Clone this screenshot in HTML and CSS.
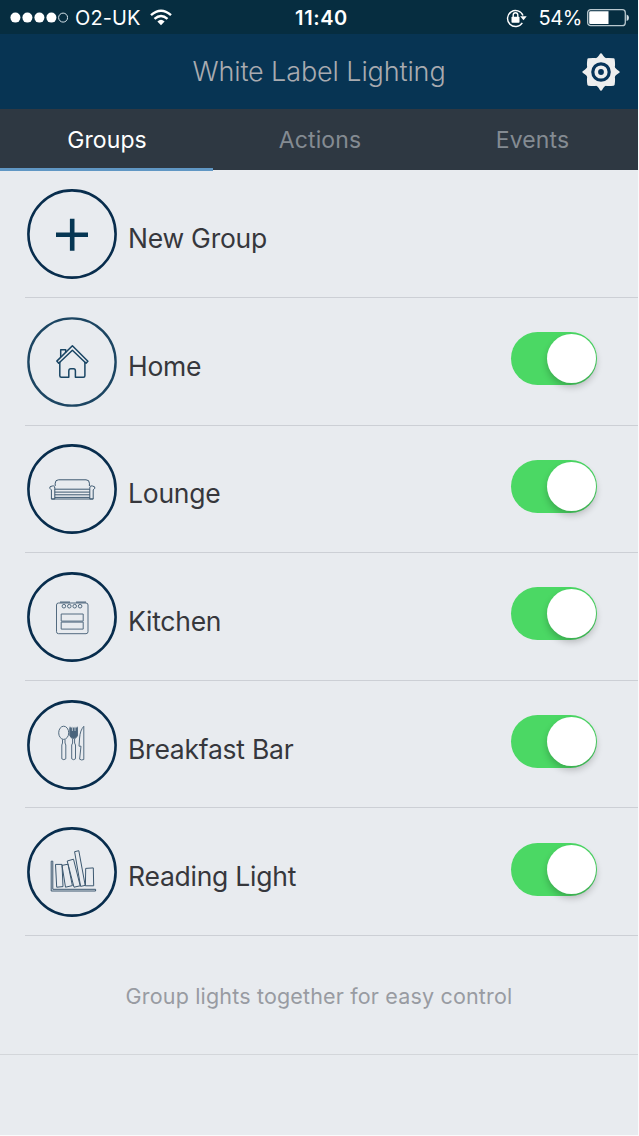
FILE: index.html
```
<!DOCTYPE html>
<html lang="en">
<head>
<meta charset="utf-8">
<title>White Label Lighting</title>
<link rel="stylesheet" href="styles.css">
</head>
<body>
<div class="app">
  <header class="status">
    <div class="status-left">
      <svg class="signal" width="58" height="12" viewBox="0 0 58 12"><g fill="#fff"><circle cx="5.4" cy="5.6" r="5"/><circle cx="17.4" cy="5.6" r="5"/><circle cx="29.4" cy="5.6" r="5"/><circle cx="41.4" cy="5.6" r="5"/></g><circle cx="53.1" cy="5.6" r="4.5" fill="none" stroke="#d5e3ea"/></svg>
      <span class="carrier">O2-UK</span>
      <svg class="wifi" width="22" height="18" viewBox="0 0 22 18"><g fill="none" stroke="#fff" stroke-width="2.4"><path d="M1 6.2Q11-2.7 21 6.2"/><path d="M4.5 9.8Q11 4 17.5 9.8"/></g><path d="M7.4 12.4Q11 9.2 14.6 12.4L11 16.2z" fill="#fff"/></svg>
    </div>
    <span class="clock">11:40</span>
    <div class="status-right">
      <svg class="lock" width="21" height="20" viewBox="0 0 21 20"><path d="M16.3 14.8A8 8 0 1 1 17 7.6" fill="none" stroke="#fff" stroke-width="1.4"/><path d="M14.2 8.2h6.5l-3.2 4z" fill="#fff"/><rect x="5.5" y="8.7" width="8" height="6" rx=".7" fill="#fff"/><path d="M7.2 9V7a2.3 2.3 0 0 1 4.6 0v2" fill="none" stroke="#fff" stroke-width="1.4"/></svg>
      <span class="percent">54%</span>
      <svg class="battery" width="43" height="18" viewBox="0 0 43 18"><rect x=".7" y=".7" width="37.6" height="16" rx="3" fill="none" stroke="#b9c8ce" stroke-width="1.3"/><path d="M3.5 2.3H21.5V15.1H3.5Q2.2 15.1 2.2 13.8V3.6Q2.2 2.3 3.5 2.3z" fill="#fff"/><path d="M39.6 5.5Q42 6.2 42 8.8T39.6 12z" fill="#d5e0e4"/></svg>
    </div>
  </header>
  <div class="nav">
    <h1 class="title">White Label Lighting</h1>
    <svg class="gear" width="38" height="38" viewBox="-19 -19 38 38"><path d="M0-17.3Q3-12.2 5.6-12.6Q8-13 12.4-12.4Q13-8 12.6-5.6Q12.2-3 17.3 0Q12.2 3 12.6 5.6Q13 8 12.4 12.4Q8 13 5.6 12.6Q3 12.2 0 17.3Q-3 12.2-5.6 12.6Q-8 13-12.4 12.4Q-13 8-12.6 5.6Q-12.2 3-17.3 0Q-12.2-3-12.6-5.6Q-13-8-12.4-12.4Q-8-13-5.6-12.6Q-3-12.2 0-17.3z" fill="#eee" stroke="#eee" stroke-width="2.6" stroke-linejoin="round"/><circle r="8.2" fill="none" stroke="#07345a" stroke-width="3.2"/><circle r="2.9" fill="#07345a"/></svg>
  </div>
  <nav class="tabs">
    <span class="tab active">Groups</span>
    <span class="tab">Actions</span>
    <span class="tab">Events</span>
  </nav>
  <main class="list">
    <div class="row">
      <svg class="icon" width="90" height="90" viewBox="-45 -45 90 90"><circle class="ring" r="43.6"/><path d="M-16 .7H16M.2-15.2V16.8" class="plus"/></svg>
      <span class="name">New Group</span>
    </div>
    <div class="row">
      <svg class="icon" width="90" height="90" viewBox="-45 -45 90 90"><circle class="ring thin" r="43.6"/><g class="line house"><path d="M-15.2-.9L.4-16.3L15.9-.8L14 1.3L.4-11.8L-13.3 1.3z"/><path d="M-12.2-.2V13.8Q-12.2 15.3-10.7 15.3H-3.2V9Q-3.2 6.8-1.2 6.8H1.6Q3.4 6.8 3.4 9V15.3H11.4Q12.9 15.3 12.9 13.8V-.2"/><path d="M-11.3-5V-12.3H-6.3V-9.5"/></g></svg>
      <span class="name">Home</span><span class="switch"><i class="knob"></i></span>
    </div>
    <div class="row">
      <svg class="icon" width="90" height="90" viewBox="-45 -45 90 90"><circle class="ring" r="43.6"/><g class="line"><path d="M-16.8-3V-5.8Q-16.8-9.2-13.4-9.2H14Q17.4-9.2 17.4-5.8V-3"/><path d="M-17.2 10H-20.6V.9Q-23.2-.9-22-2.2Q-17-4.6-17.2-.8zM17.8 10H21.2V.9Q23.8-.9 22.6-2.2Q17.6-4.6 17.8-.8z"/><path d="M-17.2.2H17.8M-17.2 3.1H17.8M-17.2 5.8H17.8M-17.2 8.4H17.8M-20.6 10H21.2"/></g></svg>
      <span class="name">Lounge</span><span class="switch"><i class="knob"></i></span>
    </div>
    <div class="row">
      <svg class="icon" width="90" height="90" viewBox="-45 -45 90 90"><circle class="ring" r="43.6"/><g class="line oven"><rect x="-15.5" y="-14" width="31.5" height="30.7" rx="2"/><path d="M-12-14.8H-2M4-14.8H14" stroke-width="1.2"/><circle cx="-8.1" cy="-10.8" r="1.8"/><circle cx="-2.7" cy="-10.8" r="1.8"/><circle cx="2.7" cy="-10.8" r="1.8"/><circle cx="8.1" cy="-10.8" r="1.8"/><path d="M-10.8-3H11.2V4.1H-10.8zM-10.8 5.1H11.2V12.1H-10.8z"/></g></svg>
      <span class="name">Kitchen</span><span class="switch"><i class="knob"></i></span>
    </div>
    <div class="row">
      <svg class="icon" width="90" height="90" viewBox="-45 -45 90 90"><circle class="ring" r="43.6"/><g class="line cutlery"><ellipse cx="-8.3" cy="-12.2" rx="5" ry="6.6"/><path d="M-9.5-5.5V-2L-10.2 0V13.8Q-8.2 15.6-6.2 13.8V0L-7-2V-5.5"/><path d="M-2-18.3V-9.5Q-1.7-7.5.6-6.3V-2L-.3 0V13.8Q1.6 15.6 3.5 13.8V0L2.6-2V-6.3Q5-7.5 5.3-9.5V-18.3"/><path class="tines" d="M-2-17H5.3V-9.5Q4.6-7.2 1.7-6.6Q-1.4-7.2-2-9.5z"/><path d="M.4-18.3V-14M3-18.3V-14" stroke="#b9c4cd"/><path d="M11.8 14.5V-18.7Q8.2-15 7.6-7L7 1.2H9L7.6 14.2Q9.5 15.6 11.8 14.5z"/></g></svg>
      <span class="name">Breakfast Bar</span><span class="switch"><i class="knob"></i></span>
    </div>
    <div class="row">
      <svg class="icon" width="90" height="90" viewBox="-45 -45 90 90"><circle class="ring" r="43.6"/><g class="line"><path d="M-20.8-10.8H-19.2V17.3H23.6V19H-20.8z"/><path d="M-16.5-7.6H-10L-9 14.6L-15.3 15.2zM-10-6.6L-4-7.8L.4 13.6L-6.5 15.2zM-4.8-11L1.5-12.8L8.2 13.8L2 15.2zM2.6-20.3L6.8-21.3L13.2 13.4L8.6 14.4zM13.7-3.6L21.3-4.1L21.7 13.8H13.4z"/></g></svg>
      <span class="name">Reading Light</span><span class="switch"><i class="knob"></i></span>
    </div>
  </main>
  <p class="hint">Group lights together for easy control</p>
</div>
</body>
</html>
```
FILE: styles.css
```
* { box-sizing: border-box; }
body { margin: 0; background: #fafbfc; font-family: Inter, "Liberation Sans", sans-serif; }
.app { width: 638px; height: 1135px; background: #e8ebef; }
svg { display: block; flex: none; }
.status { height: 34px; background: #062d40; color: #fff; display: grid; grid-template-columns: 1fr auto 1fr; align-items: center; padding: 1px 8px 0 10px; font-size: 20px; line-height: 32px; }
.status-left, .status-right { display: flex; align-items: center; }
.status-right { justify-content: flex-end; }
.carrier { margin-left: 7px; letter-spacing: .1px; }
.wifi { margin-left: 9px; }
.clock { font-weight: 600; letter-spacing: .6px; padding-left: 3px; }
.lock { margin-right: 11px; }
.percent { margin-right: 5px; letter-spacing: -.4px; }
.nav { height: 75px; background: #073453; display: grid; grid-template-columns: 38px 1fr 38px; align-items: center; padding: 0 18px; }
.title { grid-column: 2; margin: 0; text-align: center; color: #a9abb0; font-size: 27px; font-weight: 350; letter-spacing: -.12px; line-height: 32px; }
.tabs { height: 61px; background: #2e3842; display: grid; grid-template-columns: 213px 213px 212px; }
.tab { height: 62px; padding-left: 1px; color: #848b92; font-size: 23px; line-height: 62px; text-align: center; letter-spacing: .1px; }
.tab.active { color: #fff; border-bottom: 3px solid #6097c4; }
.list { padding-top: .4px; }
.row { height: 127.6px; margin-left: 25px; padding: 1px 41px 0 2px; border-bottom: 1px solid #cccfd5; display: flex; align-items: center; }
.name { flex: 1; margin-left: 11px; padding-top: 8px; color: #36373c; font-size: 26.5px; letter-spacing: -.24px; line-height: 32px; }
.ring { fill: none; stroke: #082d4d; stroke-width: 2.6; }
.ring.thin { stroke: #1c4562; stroke-width: 2.4; }
.plus { stroke: #063653; stroke-width: 4.6; }
.line { fill: none; stroke: #3c5870; stroke-width: 1; stroke-linejoin: round; }
.house { stroke: #194564; stroke-width: 1.5; }
.oven, .cutlery { stroke: #536b80; }
.tines { fill: #4a647c; }
.switch { width: 86px; height: 53px; margin-bottom: 6px; padding: 2px 1px; border-radius: 27px; background: #4bd864; display: flex; justify-content: flex-end; }
.knob { width: 49px; height: 49px; border-radius: 50%; background: #fff; box-shadow: 0 4px 7px rgba(0, 0, 0, .22); }
.hint { height: 119px; margin: 0; border-bottom: 1px solid #d3d6da; color: #989ba2; font-size: 21.5px; letter-spacing: .17px; line-height: 121px; text-align: center; }
```
